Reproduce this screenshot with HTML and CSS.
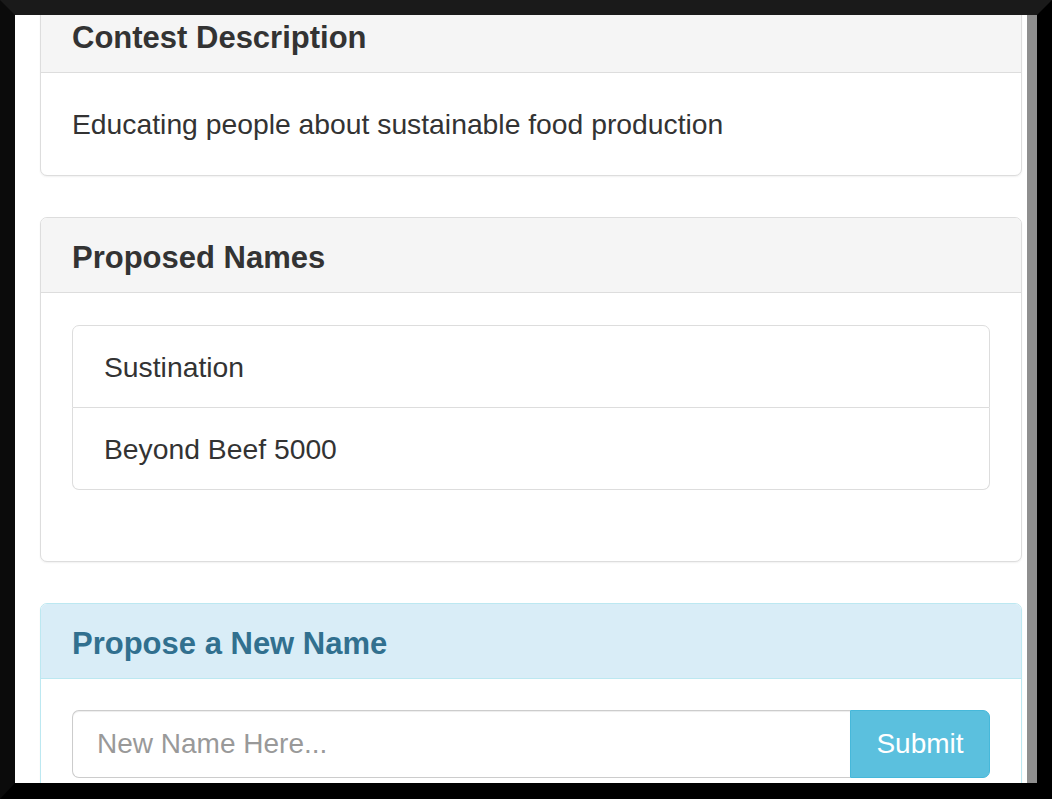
FILE: index.html
```html
<!DOCTYPE html>
<html>
<head>
<meta charset="utf-8">
<link rel="stylesheet" href="styles.css">
</head>
<body>
<div class="frame">
  <div class="viewport">
    <div class="content">
      <div class="panel panel-default first">
        <div class="panel-heading"><h3 class="panel-title">Contest Description</h3></div>
        <div class="panel-body">Educating people about sustainable food production</div>
      </div>
      <div class="panel panel-default">
        <div class="panel-heading"><h3 class="panel-title">Proposed Names</h3></div>
        <div class="panel-body list-body">
          <ul class="list-group">
            <li class="list-group-item">Sustination</li>
            <li class="list-group-item">Beyond Beef 5000</li>
          </ul>
        </div>
      </div>
      <div class="panel panel-info">
        <div class="panel-heading"><h3 class="panel-title">Propose a New Name</h3></div>
        <div class="panel-body">
          <form class="input-group">
            <input class="form-control" type="text" placeholder="New Name Here...">
            <button class="btn-info" type="button">Submit</button>
          </form>
        </div>
      </div>
    </div>
    <div class="scrollbar"></div>
  </div>
</div>
</body>
</html>
```
FILE: styles.css
```css
html, body {
  margin: 0;
  padding: 0;
  background: #000;
}
.frame {
  width: 1022px;
  height: 768px;
  border-top: 15px solid #1a1a1a;
  border-left: 15px solid #0b0b0b;
  border-right: 15px solid #000;
  border-bottom: 16px solid #000;
  overflow: hidden;
}
.viewport {
  display: flex;
  height: 768px;
  background: #fff;
  overflow: hidden;
}
.content {
  width: 982px;
  padding: 0 5px 0 25px;
  font-family: "Liberation Sans", Arial, sans-serif;
  font-size: 28.3px;
  line-height: 40px;
  color: #333;
}
.scrollbar {
  width: 10px;
  flex: none;
  background: #8f8f8f;
}
.panel {
  border: 1px solid #ddd;
  border-radius: 7px;
  margin-bottom: 41px;
  box-shadow: 0 1px 2px rgba(0, 0, 0, 0.06);
  background: #fff;
}
.panel.first {
  margin-top: -18px;
}
.panel-heading {
  padding: 23px 31px 17px;
  border-bottom: 1px solid #ddd;
  background: #f5f5f5;
  border-radius: 6px 6px 0 0;
  color: #333;
}
.panel-title {
  margin: 0;
  font-size: 31px;
  line-height: 34px;
  font-weight: bold;
}
.panel-body {
  padding: 31px;
}
.list-body {
  padding-top: 32px;
}
.list-group {
  list-style: none;
  margin: 0 0 40px;
  padding: 0;
}
.list-group-item {
  border: 1px solid #ddd;
  padding: 21px 31px 20px;
}
.list-group-item + .list-group-item {
  border-top: 0;
}
.list-group-item:first-child {
  border-radius: 7px 7px 0 0;
}
.list-group-item:last-child {
  border-radius: 0 0 7px 7px;
}
.panel-info {
  border-color: #bce8f1;
}
.panel-info .panel-heading {
  background: #d9edf7;
  border-bottom-color: #bce8f1;
  color: #31708f;
}
.input-group {
  display: flex;
  margin: 0;
}
.form-control {
  flex: 1;
  height: 68px;
  box-sizing: border-box;
  border: 1px solid #ccc;
  border-right: 0;
  border-radius: 7px 0 0 7px;
  padding: 12px 24px;
  font-family: "Liberation Sans", Arial, sans-serif;
  font-size: 28px;
  color: #555;
  box-shadow: inset 0 1px 1px rgba(0, 0, 0, 0.075);
  outline: none;
}
.form-control::placeholder {
  color: #999;
}
.btn-info {
  width: 140px;
  height: 68px;
  box-sizing: border-box;
  background: #5bc0de;
  border: 1px solid #46b8da;
  border-radius: 0 7px 7px 0;
  color: #fff;
  font-family: "Liberation Sans", Arial, sans-serif;
  font-size: 28px;
  padding: 12px 24px;
}
```
